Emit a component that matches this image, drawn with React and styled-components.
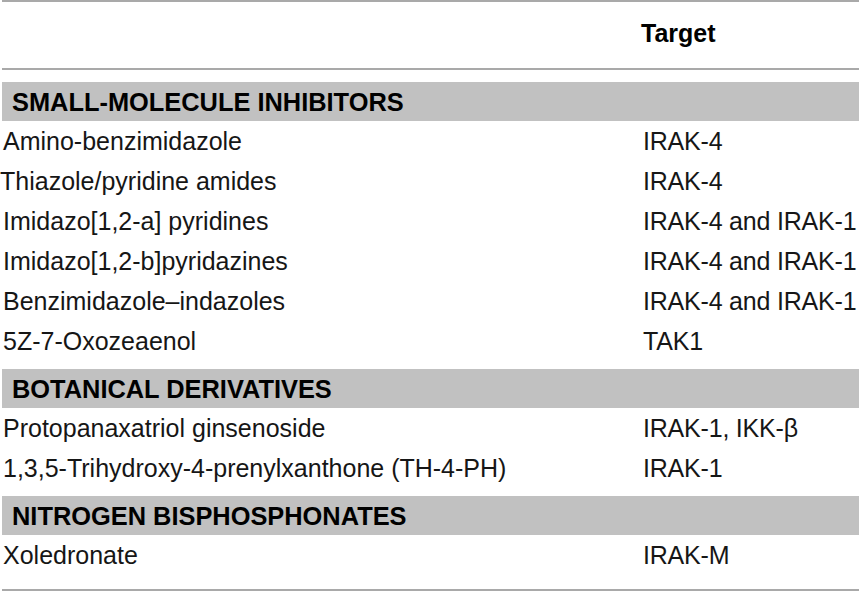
import styled, { createGlobalStyle } from "styled-components";

const sections = [
  {
    title: "SMALL-MOLECULE INHIBITORS",
    rows: [
      ["Amino-benzimidazole", "IRAK-4"],
      ["Thiazole/pyridine amides", "IRAK-4", 0],
      ["Imidazo[1,2-a] pyridines", "IRAK-4 and IRAK-1"],
      ["Imidazo[1,2-b]pyridazines", "IRAK-4 and IRAK-1"],
      ["Benzimidazole–indazoles", "IRAK-4 and IRAK-1"],
      ["5Z-7-Oxozeaenol", "TAK1"],
    ],
  },
  {
    title: "BOTANICAL DERIVATIVES",
    rows: [
      ["Protopanaxatriol ginsenoside", "IRAK-1, IKK-β"],
      ["1,3,5-Trihydroxy-4-prenylxanthone (TH-4-PH)", "IRAK-1"],
    ],
  },
  {
    title: "NITROGEN BISPHOSPHONATES",
    rows: [["Xoledronate", "IRAK-M"]],
  },
];

const App = () => {
  return (
    <>
      <GlobalStyle />
      <Page>
        <Table>
          <HeadRow>
            <span />
            <HeadCell>Target</HeadCell>
          </HeadRow>
          {sections.map((s, i) => (
            <Section key={s.title} first={i === 0}>
              <Band>{s.title}</Band>
              {s.rows.map(([name, target, indent]) => (
                <Row key={name}>
                  <Cell indent={indent}>{name}</Cell>
                  <TargetCell>{target}</TargetCell>
                </Row>
              ))}
            </Section>
          ))}
        </Table>
      </Page>
    </>
  );
};

const GlobalStyle = createGlobalStyle`
  body {
    margin: 0;
    background: #fff;
    font-family: "Liberation Sans", Arial, sans-serif;
    color: #161616;
  }
`;

const Page = styled.div`
  width: 859px;
  height: 593px;
  padding-left: 2px;
  box-sizing: border-box;
  overflow: hidden;
`;

const Table = styled.div`
  display: flex;
  flex-direction: column;
  border-top: 2px solid #a9a9a9;
  border-bottom: 2px solid #a9a9a9;
  padding-bottom: 14px;
`;

const HeadRow = styled.div`
  display: grid;
  grid-template-columns: 639px 1fr;
  height: 66px;
  align-items: center;
  border-bottom: 2px solid #a9a9a9;
`;

const HeadCell = styled.div`
  font-size: 25px;
  font-weight: bold;
  color: #000;
  padding-bottom: 4px;
`;

const Section = styled.div`
  margin-top: ${(p) => (p.first ? "12px" : "8px")};
`;

const Band = styled.div`
  height: 39px;
  line-height: 40px;
  background: #c1c1c1;
  padding-left: 10px;
  font-size: 25.4px;
  font-weight: bold;
  color: #000;
  white-space: nowrap;
`;

const Row = styled.div`
  display: grid;
  grid-template-columns: 640px 1fr;
  height: 40px;
  line-height: 40px;
  font-size: 25px;
`;

const Cell = styled.div`
  padding-left: ${(p) => (p.indent ?? 1)}px;
  margin-left: ${(p) => (p.indent === 0 ? "-2px" : "0")};
  white-space: nowrap;
`;

const TargetCell = styled(Cell)`
  letter-spacing: -0.2px;
`;

export default App;
